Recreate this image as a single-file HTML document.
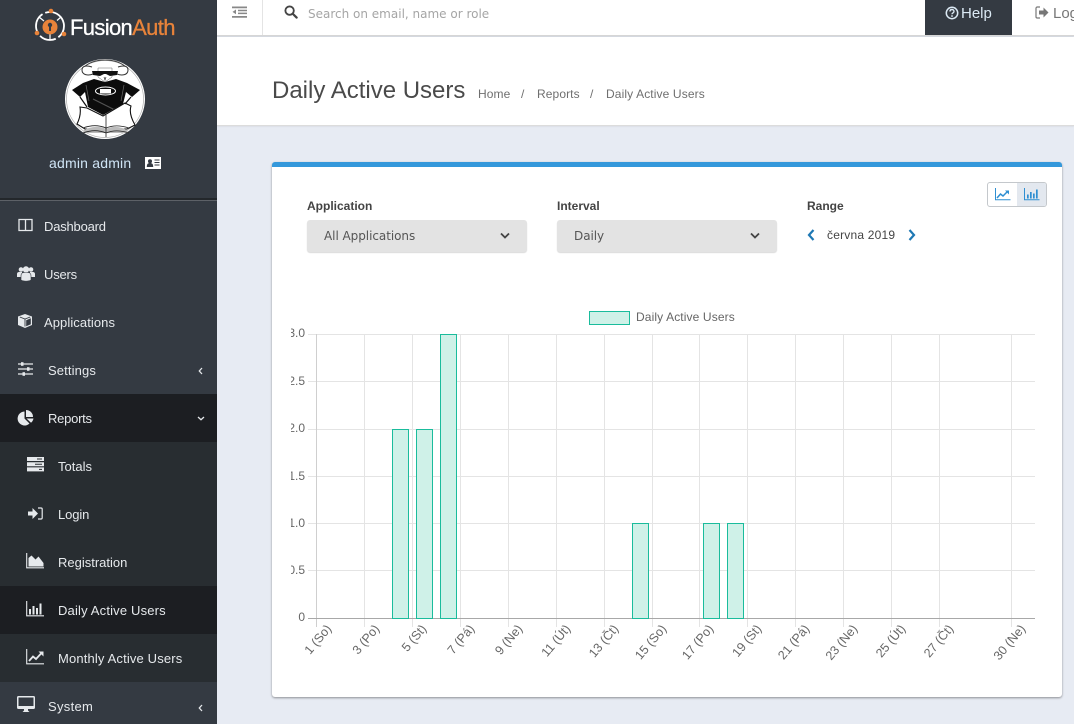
<!DOCTYPE html>
<html lang="cs">
<head>
<meta charset="utf-8">
<title>Daily Active Users</title>
<style>
*{box-sizing:border-box}
html,body{margin:0;padding:0}
body{width:1074px;height:724px;overflow:hidden;position:relative;background:#e7ebf3;font-family:"Liberation Sans",sans-serif;font-size:13px;color:#555}
.abs{position:absolute;white-space:nowrap}
#side{position:absolute;left:0;top:0;width:217px;height:724px;background:#343a42;overflow:hidden}
.row{position:absolute;left:0;width:217px;height:48px;line-height:50px;color:#e6e9ec;font-size:13px;white-space:nowrap}
.row span{position:absolute;top:0}
.row svg{position:absolute}
.sub{background:#282d31}
.dark{background:#1c1e22}
#top{position:absolute;left:217px;top:0;width:857px;height:36px;background:#fff;border-bottom:1px solid #d6d6d6;box-shadow:0 1px 1px rgba(0,0,0,.1)}
#head{position:absolute;left:217px;top:37px;width:857px;height:89px;background:#fff;border-bottom:1px solid #dcdcdc;box-shadow:0 1px 1px rgba(0,0,0,.05)}
#card{position:absolute;left:272px;top:162px;width:790px;height:535px;background:#fff;border-top:5px solid #3498db;border-radius:3px;box-shadow:0 1px 2px rgba(0,0,0,.4)}
.lbl{position:absolute;font-weight:bold;font-size:12px;color:#444;white-space:nowrap}
.sel{position:absolute;top:220px;width:220px;height:32px;background:#e3e3e3;border-radius:3px;box-shadow:0 1px 1px rgba(0,0,0,.15);font-family:"DejaVu Sans",sans-serif;font-size:12px;line-height:31px;color:#555;padding-left:17px;letter-spacing:-.05px}
.sel svg{position:absolute;right:17px;top:12px}
</style>
</head>
<body>
<div id="side">
  <svg class="abs" style="left:33px;top:8px" width="36" height="36" viewBox="0 0 36 36">
    <circle cx="17" cy="18" r="14" fill="none" stroke="#fff" stroke-width="1.800" stroke-dasharray="13 3 17 3 22 3 24 0"/>
    <path d="M6 9l5 4M28 9l-4 3.500M17 32v-6" stroke="#fff" stroke-width="1.200"/>
    <circle cx="17" cy="19" r="7.500" fill="#e8833a"/>
    <circle cx="17" cy="17" r="2.200" fill="#343a42"/>
    <rect x="16" y="17" width="2" height="6" fill="#343a42"/>
    <circle cx="18" cy="3" r="2.300" fill="#e8833a"/>
    <circle cx="4" cy="25" r="2.300" fill="#e8833a"/>
    <circle cx="31" cy="26" r="2.300" fill="#e8833a"/>
  </svg>
  <div class="abs" style="left:70px;top:14px;font-size:22px;line-height:27px;color:#fff;letter-spacing:-.65px;-webkit-text-stroke:.3px">Fusion<span style="color:#e8833a">Auth</span></div>

  <svg class="abs" style="left:65px;top:59px" width="80" height="80" viewBox="0 0 80 80">
    <circle cx="40" cy="40" r="40" fill="#fff"/>
    <circle cx="40" cy="40" r="38.500" fill="none" stroke="#aaa" stroke-width=".7"/>
    <path d="M18 9C24 3 32 1 40 1s16 2 22 8" fill="none" stroke="#444" stroke-width="1"/>
    <path d="M27 8c-6-2-10-1-10 3 0 5 6 6 11 4M53 8c6-2 10-1 10 3 0 5-6 6-11 4" fill="#fff" stroke="#333" stroke-width="1"/>
    <path d="M29 20L18 24 7 31l8 7 5-5 3 15 15 8 20-11 3-12 6 5 8-7-13-7-11-4-11 3z" fill="#0c0c0c"/>
    <path d="M33 9v9l7 5 7-5V9z" fill="#fff" stroke="#666" stroke-width=".5"/>
    <path d="M27 12h26l-1 4-7 1-4-2h-2l-4 2-7-1z" fill="#111"/>
    <path d="M39 18l1 3 1-3" fill="none" stroke="#333" stroke-width=".7"/>
    <ellipse cx="40.500" cy="32" rx="10" ry="4" fill="none" stroke="#fff" stroke-width="1"/>
    <rect x="35" y="30" width="11" height="4.500" fill="#fff"/>
    <path d="M28 40l24 12" stroke="#555" stroke-width="1"/>
    <path d="M21 26l3 16M59 26l-3 16" stroke="#666" stroke-width=".7"/>
    <path d="M15 48l7 1 16 8 22-13 6 3c-2 6 0 12 4 19l-8 4H20l-8-5c3-6 4-11 3-17z" fill="#fff" stroke="#111" stroke-width="1.100"/>
    <path d="M15 38l7 10M66 38l-6 7" stroke="#111" stroke-width="1.200"/>
    <path d="M19 71c8-4 16-4 22-1 6-3 13-3 21 1l1 3H18z" fill="#bbb"/>
    <path d="M41 56v22M18 69c8-3 16-3 23 0 7-3 14-3 23 0M18 74c8-3 16-3 23 0 7-3 14-3 23 0" fill="none" stroke="#222" stroke-width=".8"/>
  </svg>
  <div class="abs" style="left:49px;top:155px;font-size:14px;line-height:16px;color:#cfe4f5;letter-spacing:.2px">admin admin</div>
  <svg class="abs" style="left:145px;top:157px" width="16" height="12" viewBox="0 0 16 12">
    <rect width="16" height="12" fill="#fff"/>
    <circle cx="5" cy="4.200" r="2" fill="#343a42"/>
    <path d="M1.800 10c0-3 1-4 3.200-4s3.200 1 3.200 4z" fill="#343a42"/>
    <path d="M9.500 3h5M9.500 5.500h5M9.500 8h5" stroke="#343a42" stroke-width="1.100"/>
  </svg>
  <div class="abs" style="left:0;top:198px;width:217px;height:2px;background:#23272b"></div>
  <div class="abs" style="left:0;top:200px;width:217px;height:1px;background:#5d6167"></div>

  <div class="row" style="top:202px"><svg style="left:18px;top:16px" width="15" height="14" viewBox="0 0 15 14"><path d="M1 1.500h13v11H1zM7.500 1.500v11" fill="none" stroke="#e6e9ec" stroke-width="1.300"/></svg><span style="left:44px;letter-spacing:-.2px">Dashboard</span></div>
  <div class="row" style="top:250px"><svg style="left:17px;top:15px" width="18" height="17" viewBox="0 0 18 17"><circle cx="4" cy="4.500" r="2.300" fill="#e6e9ec"/><circle cx="14" cy="4.500" r="2.300" fill="#e6e9ec"/><circle cx="9" cy="4.500" r="3.200" fill="#e6e9ec"/><path d="M0 12V9c0-1.500 1-2 2-2h3v5zM18 12V9c0-1.500-1-2-2-2h-3v5z" fill="#e6e9ec"/><path d="M4 15v-4c0-2.500 1.500-3.500 3-3.500h4c1.500 0 3 1 3 3.500v4c-2 1.500-8 1.500-10 0z" fill="#e6e9ec" stroke="#343a42" stroke-width=".6"/></svg><span style="left:44px;letter-spacing:-.2px">Users</span></div>
  <div class="row" style="top:298px"><svg style="left:17px;top:15px" width="16" height="16" viewBox="0 0 16 16"><path d="M8 1l7 2.500v8.500L8 15 1 12V3.500z" fill="#e6e9ec"/><path d="M2.800 4l5.200 2 5.200-2M8 6v7.500" fill="none" stroke="#343a42" stroke-width=".9"/><path d="M9.200 7.200l4.600-1.900v5.900l-4.600 2z" fill="#343a42"/></svg><span style="left:44px;letter-spacing:.08px">Applications</span></div>
  <div class="row" style="top:346px"><svg style="left:18px;top:16px" width="15" height="14" viewBox="0 0 15 14"><path d="M0 2h15M0 7h15M0 12h15" stroke="#e6e9ec" stroke-width="1.200"/><rect x="3" y=".2" width="2.500" height="3.600" fill="#e6e9ec"/><rect x="9" y="5.200" width="2.500" height="3.600" fill="#e6e9ec"/><rect x="4.500" y="10.200" width="2.500" height="3.600" fill="#e6e9ec"/></svg><span style="left:48px;letter-spacing:.12px">Settings</span><svg style="left:198px;top:21px" width="5" height="8" viewBox="0 0 5 8"><path d="M4 1L1.300 4 4 7" fill="none" stroke="#e6e9ec" stroke-width="1.300"/></svg></div>
  <div class="row dark" style="top:394px"><svg style="left:17px;top:15px" width="17" height="17" viewBox="0 0 17 17"><path d="M7.500 2.500v7l5 5A7 7 0 1 1 7.500 2.500z" fill="#e6e9ec"/><path d="M9 1a7 7 0 0 1 7 7H9z" fill="#e6e9ec"/><path d="M9.500 9.500H16.500a7 7 0 0 1-2.500 4.200z" fill="#e6e9ec"/></svg><span style="left:48px;letter-spacing:-.25px">Reports</span><svg style="left:197px;top:22px" width="8" height="5" viewBox="0 0 8 5"><path d="M1 1l3 2.700L7 1" fill="none" stroke="#e6e9ec" stroke-width="1.300"/></svg></div>
  <div class="row sub" style="top:442px"><svg style="left:27px;top:15px" width="17" height="15" viewBox="0 0 17 15"><path d="M0 0h17v4H0zM0 5.200h17v4H0zM0 10.400h17v4H0z" fill="#e6e9ec"/><path d="M10 2h5M8 7.200h7M12 12.400h3" stroke="#282d31" stroke-width="1"/></svg><span style="left:58px">Totals</span></div>
  <div class="row sub" style="top:490px"><svg style="left:28px;top:17px" width="15" height="13" viewBox="0 0 15 13"><path d="M0 4.500h4.500V1L10 6.500 4.500 12V8.500H0z" fill="#e6e9ec"/><path d="M10 1h3a1.200 1.200 0 0 1 1.200 1.200v8.600A1.200 1.200 0 0 1 13 12h-3" fill="none" stroke="#e6e9ec" stroke-width="1.200"/></svg><span style="left:58px;letter-spacing:-.1px">Login</span></div>
  <div class="row sub" style="top:538px"><svg style="left:26px;top:15px" width="19" height="16" viewBox="0 0 19 16"><path d="M.7 0v14.800H18" fill="none" stroke="#e6e9ec" stroke-width="1.100"/><path d="M2.500 13.500V5l3-2.500 4 4 3-3 5 6.500v3.500z" fill="#e6e9ec"/></svg><span style="left:58px">Registration</span></div>
  <div class="row dark" style="top:586px"><svg style="left:26px;top:15px" width="19" height="16" viewBox="0 0 19 16"><path d="M.7 0v14.800H18" fill="none" stroke="#e6e9ec" stroke-width="1.100"/><path d="M3 8h2v5.500H3zM6.500 5h2v8.500h-2zM10 7h2v6.500h-2zM13.500 2.500h2v11h-2z" fill="#e6e9ec"/></svg><span style="left:58px;letter-spacing:.17px">Daily Active Users</span></div>
  <div class="row sub" style="top:634px"><svg style="left:26px;top:15px" width="19" height="16" viewBox="0 0 19 16"><path d="M.7 0v14.800H18" fill="none" stroke="#e6e9ec" stroke-width="1.100"/><path d="M3 12l4-4.500 3 2.500 6-6.500" fill="none" stroke="#e6e9ec" stroke-width="1.800"/><path d="M12.500 2.500h5v5z" fill="#e6e9ec"/></svg><span style="left:58px;letter-spacing:.15px">Monthly Active Users</span></div>
  <div class="row" style="top:682px"><svg style="left:17px;top:14px" width="18" height="17" viewBox="0 0 18 17"><path d="M1.500 0h15A1.500 1.500 0 0 1 18 1.500v10a1.500 1.500 0 0 1-1.500 1.500H11v1.500l1.500 1.500h-7L7 14.500V13H1.500A1.500 1.500 0 0 1 0 11.500v-10A1.500 1.500 0 0 1 1.500 0z" fill="#e6e9ec"/><rect x="1.500" y="1.500" width="15" height="8.500" fill="#343a42"/></svg><span style="left:48px;letter-spacing:.3px">System</span><svg style="left:198px;top:22px" width="5" height="8" viewBox="0 0 5 8"><path d="M4 1L1.300 4 4 7" fill="none" stroke="#e6e9ec" stroke-width="1.300"/></svg></div>
</div>

<div id="top">
  <svg class="abs" style="left:15px;top:6px" width="16" height="13" viewBox="0 0 16 13"><path d="M0 .5h15v1.800H0zM6 3.800h9v1.500H6zM6 6.600h9v1.500H6zM0 10h15v1.800H0z" fill="#888"/><path d="M4 3.500v4.800L.5 5.900z" fill="#888"/></svg>
  <div class="abs" style="left:45px;top:0;width:1px;height:35px;background:#e4e4e4"></div>
  <svg class="abs" style="left:67px;top:5px" width="14" height="14" viewBox="0 0 15 15"><circle cx="6" cy="6" r="4.500" fill="none" stroke="#444" stroke-width="2"/><path d="M9.500 9.500L13.500 13.500" stroke="#444" stroke-width="2.400" stroke-linecap="round"/></svg>
  <div class="abs" style="left:91px;top:7px;font-family:'DejaVu Sans',sans-serif;font-size:12px;line-height:15px;color:#a5a5a5;letter-spacing:0">Search on email, name or role</div>
  <div class="abs" style="left:708px;top:0;width:87px;height:35px;background:#343a42"></div>
  <svg class="abs" style="left:728px;top:6px" width="14" height="14" viewBox="0 0 14 14"><circle cx="7" cy="7" r="5.700" fill="none" stroke="#dbe9f4" stroke-width="1.500"/><path d="M5 5.500C5 4 6 3.500 7 3.500S9 4.200 9 5.400C9 7 7 6.800 7 8.300" fill="none" stroke="#dbe9f4" stroke-width="1.400"/><rect x="6.200" y="9.300" width="1.600" height="1.500" fill="#dbe9f4"/></svg>
  <div class="abs" style="left:744px;top:5px;font-size:15px;line-height:17px;color:#dbe9f4">Help</div>
  <svg class="abs" style="left:818px;top:6px" width="14" height="13" viewBox="0 0 14 13"><path d="M5 1H2.300A1.300 1.300 0 0 0 1 2.300v8.400A1.300 1.300 0 0 0 2.300 12H5" fill="none" stroke="#777" stroke-width="1.200"/><path d="M4 4.500h4.500V1.500l5 5-5 5v-3H4z" fill="#777"/></svg>
  <div class="abs" style="left:836px;top:5px;font-size:15px;line-height:17px;color:#777">Logout</div>
</div>

<div id="head">
  <div class="abs" style="left:55px;top:40px;font-size:24px;line-height:28px;color:#4a4a4a">Daily Active Users</div>
  <div class="abs" style="left:261px;top:50px;font-size:12px;line-height:15px;color:#6f6f6f;letter-spacing:.1px">Home</div>
  <div class="abs" style="left:304px;top:50px;font-size:12px;line-height:15px;color:#6f6f6f">/</div>
  <div class="abs" style="left:320px;top:50px;font-size:12px;line-height:15px;color:#6f6f6f;letter-spacing:.1px">Reports</div>
  <div class="abs" style="left:373px;top:50px;font-size:12px;line-height:15px;color:#6f6f6f">/</div>
  <div class="abs" style="left:389px;top:50px;font-size:12px;line-height:15px;color:#6f6f6f;letter-spacing:.12px">Daily Active Users</div>
</div>

<div id="card"></div>

<div class="lbl" style="left:307px;top:199px">Application</div>
<div class="lbl" style="left:557px;top:199px">Interval</div>
<div class="lbl" style="left:807px;top:199px">Range</div>
<div class="sel" style="left:307px;padding-top:1px">All Applications<svg width="10" height="8" viewBox="0 0 10 8"><path d="M1 1.500L5 5.500 9 1.500" fill="none" stroke="#444" stroke-width="1.800"/></svg></div>
<div class="sel" style="left:557px;padding-top:1px">Daily<svg width="10" height="8" viewBox="0 0 10 8"><path d="M1 1.500L5 5.500 9 1.500" fill="none" stroke="#444" stroke-width="1.800"/></svg></div>

<svg class="abs" style="left:807px;top:229px" width="8" height="12" viewBox="0 0 8 12"><path d="M6.500 1L2 6l4.500 5" fill="none" stroke="#1e78b4" stroke-width="2.200"/></svg>
<div class="abs" style="left:827px;top:228px;font-size:12px;line-height:15px;color:#444;letter-spacing:.2px">června 2019</div>
<svg class="abs" style="left:908px;top:229px" width="8" height="12" viewBox="0 0 8 12"><path d="M1.500 1L6 6l-4.500 5" fill="none" stroke="#1e78b4" stroke-width="2.200"/></svg>

<div class="abs" style="left:987px;top:182px;width:60px;height:25px;border:1px solid #c4c8cc;border-radius:3px;background:#fff;overflow:hidden">
  <div class="abs" style="left:29px;top:0;width:30px;height:23px;background:#e3e8ef"></div>
  <svg class="abs" style="left:7px;top:5px" width="16" height="13" viewBox="0 0 16 13"><path d="M.5 0v11.800H15.500" fill="none" stroke="#2f8fd2" stroke-width="1"/><path d="M2 10l3.500-4 2.500 2 5-5" fill="none" stroke="#2f8fd2" stroke-width="1.500"/><path d="M10 2.500h4v4z" fill="#2f8fd2"/></svg>
  <svg class="abs" style="left:36px;top:5px" width="16" height="13" viewBox="0 0 16 13"><path d="M.5 0v11.800H15.500" fill="none" stroke="#2f8fd2" stroke-width="1"/><path d="M3 6.500h1.700v4H3zM6 4h1.700v6.500H6zM9 5.500h1.700v5H9zM12 1.500h1.700v9H12z" fill="#2f8fd2"/></svg>
</div>

<div class="abs" style="left:589px;top:311px;width:41px;height:14px;background:#cff1e8;border:1px solid #1abc9c"></div>
<div class="abs" style="left:636px;top:310px;font-size:12px;line-height:15px;color:#666;letter-spacing:.12px">Daily Active Users</div>

<svg class="abs" style="left:272px;top:320px" width="790" height="370" viewBox="272 320 790 370" font-family="Liberation Sans, sans-serif" font-size="12" fill="#666">
  <defs><clipPath id="yc"><rect x="291" y="320" width="30" height="310"/></clipPath></defs>
  <g stroke="#e4e4e4" stroke-width="1">
    <path d="M308 334.500H1035M308 381.500H1035M308 429.500H1035M308 476.500H1035M308 523.500H1035M308 570.500H1035"/>
    <path d="M364.500 334V627M412.500 334V627M460.500 334V627M508.500 334V627M556.500 334V627M604.500 334V627M652.500 334V627M699.500 334V627M747.500 334V627M795.500 334V627M843.500 334V627M891.500 334V627M939.500 334V627M1011.500 334V627"/>
  </g>
  <path d="M316.500 334V627" stroke="#cfcfcf"/>
  <path d="M308 618.500H1035" stroke="#a8a8a8"/>
  <g fill="#cff1e8" stroke="#1abc9c" stroke-width="1">
    <rect x="392.500" y="429.500" width="16" height="189"/>
    <rect x="416.500" y="429.500" width="16" height="189"/>
    <rect x="440.500" y="334.500" width="16" height="284"/>
    <rect x="632.500" y="523.500" width="16" height="95"/>
    <rect x="703.500" y="523.500" width="16" height="95"/>
    <rect x="727.500" y="523.500" width="16" height="95"/>
  </g>
  <g clip-path="url(#yc)" text-anchor="end">
    <text x="305" y="337">3.0</text><text x="305" y="385">2.5</text><text x="305" y="432">2.0</text><text x="305" y="480">1.5</text><text x="305" y="527">1.0</text><text x="305" y="574">0.5</text><text x="305" y="621">0</text>
  </g>
  <g text-anchor="end" font-size="12.500">
    <text transform="translate(332 629) rotate(-50)">1 (So)</text>
    <text transform="translate(380 629) rotate(-50)">3 (Po)</text>
    <text transform="translate(427 629) rotate(-50)">5 (St)</text>
    <text transform="translate(475 629) rotate(-50)">7 (Pá)</text>
    <text transform="translate(523 629) rotate(-50)">9 (Ne)</text>
    <text transform="translate(571 629) rotate(-50)">11 (Út)</text>
    <text transform="translate(619 629) rotate(-50)">13 (Čt)</text>
    <text transform="translate(667 629) rotate(-50)">15 (So)</text>
    <text transform="translate(714 629) rotate(-50)">17 (Po)</text>
    <text transform="translate(762 629) rotate(-50)">19 (St)</text>
    <text transform="translate(810 629) rotate(-50)">21 (Pá)</text>
    <text transform="translate(858 629) rotate(-50)">23 (Ne)</text>
    <text transform="translate(906 629) rotate(-50)">25 (Út)</text>
    <text transform="translate(954 629) rotate(-50)">27 (Čt)</text>
    <text transform="translate(1026 629) rotate(-50)">30 (Ne)</text>
  </g>
</svg>
</body>
</html>
